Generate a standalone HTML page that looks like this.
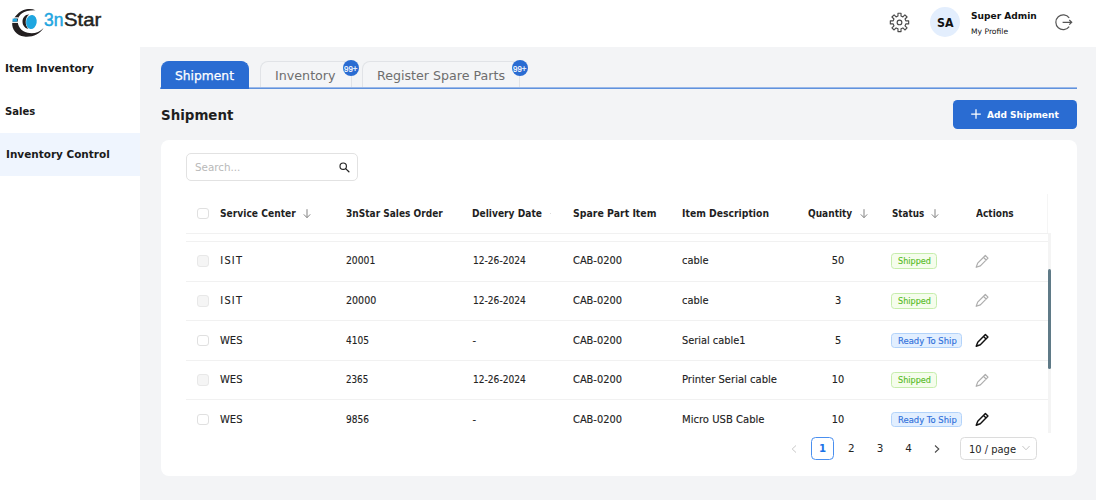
<!DOCTYPE html>
<html lang="en">
<head>
<meta charset="utf-8">
<title>3nStar - Shipment</title>
<style>
*{box-sizing:border-box;margin:0;padding:0}
html,body{width:1096px;height:500px;overflow:hidden;background:#f3f4f6}
body{position:relative;font-family:"DejaVu Sans","Liberation Sans",sans-serif;color:#222;font-size:10px}
.abs{position:absolute}
.t{position:absolute;white-space:nowrap;line-height:normal}
#header{position:absolute;left:0;top:0;width:1096px;height:47px;background:#fff}
#sidebar{position:absolute;left:0;top:47px;width:140px;height:453px;background:#fff}
#navactive{position:absolute;left:0;top:133px;width:140px;height:43px;background:#eff5fe}
.tab{position:absolute;top:60.6px;height:27.4px;border:1px solid #e1e3e7;border-bottom:none;border-radius:8px 8px 0 0;background:#f4f5f7}
.tab.on{background:#2a6cd2;border-color:#2a6cd2;top:61px;height:28px}
.badge{position:absolute;width:16px;height:16px;border-radius:8px;background:#2a6cd2}
#tabline{position:absolute;left:160px;top:87px;width:917px;height:2px;background:linear-gradient(#9bb9e9 0,#9bb9e9 50%,#6092dd 50%,#6092dd 100%)}
#addbtn{position:absolute;left:953px;top:99.5px;width:124px;height:29.5px;border-radius:4.5px;background:#2a6cd2}
#card{position:absolute;left:160.5px;top:140px;width:916.5px;height:336px;background:#fff;border-radius:8px}
#search{position:absolute;left:186px;top:152.6px;width:171.6px;height:28.8px;border:1px solid #e2e2e2;border-radius:5px;background:#fff}
.rowline{position:absolute;left:186px;width:861.8px;height:1px;background:#f1f1f1}
.cb{position:absolute;left:197.2px;width:11.6px;height:11.6px;border:1px solid #e0e0e0;border-radius:3px;background:#fff}
.cb.dis{background:#f5f5f5;border-color:#e8e8e8}
.tag{position:absolute;left:891.3px;height:15.6px;border-radius:3.5px;border:1px solid}
.tag.g{width:45.7px;background:#f5fdec;border-color:#c6edac}
.tag.b{width:70.4px;background:#e2efff;border-color:#b3d3fa}
</style>
</head>
<body>
<div id="header"></div>
<div id="sidebar"></div>
<div id="navactive"></div>

<svg class="abs" style="left:8px;top:5px" width="40" height="36" viewBox="8 5 40 36">
<path d="M35.5 10.2C32.8 8.9 29.6 8.6 26.3 9.3C18.6 10.9 13.6 17.6 12.2 22.6C11.6 29.6 16.6 35.6 24.2 36.6C32.2 37.6 39.6 34.1 43.6 28C39.4 32.4 33.6 34.2 27.6 32.8C21 31.2 17.2 25.8 17.8 20.2C18.4 14.6 23.4 9.9 35.5 10.2Z" fill="#231f20"/>
<rect x="11.5" y="17.3" width="7" height="1.3" fill="#fff"/>
<rect x="11.5" y="21.6" width="7" height="1.3" fill="#fff"/>
<rect x="12.6" y="18.6" width="4.6" height="3" fill="#1fa6e0"/>
<path d="M29.2 14.6C25.2 14.4 22.4 17.8 22.5 21.8C22.6 25.6 25.2 28.6 28.4 28.9C26.6 27.2 25.6 24.6 25.7 21.6C25.8 18.6 27 16 29.2 14.6Z" fill="#231f20"/>
<ellipse cx="31.4" cy="22" rx="5.3" ry="7" transform="rotate(8 31.4 22)" fill="#1fa6e0"/>
</svg>
<svg class="abs" style="left:888px;top:11px" width="23" height="23" viewBox="888 11 23 23"><path d="M897.98 16.08 L897.97 13.23 L901.03 13.23 L901.02 16.08 L902.90 16.86 L904.90 14.83 L907.07 17.00 L905.04 19.00 L905.82 20.88 L908.67 20.87 L908.67 23.93 L905.82 23.92 L905.04 25.80 L907.07 27.80 L904.90 29.97 L902.90 27.94 L901.02 28.72 L901.03 31.57 L897.97 31.57 L897.98 28.72 L896.10 27.94 L894.10 29.97 L891.93 27.80 L893.96 25.80 L893.18 23.92 L890.33 23.93 L890.33 20.87 L893.18 20.88 L893.96 19.00 L891.93 17.00 L894.10 14.83 L896.10 16.86Z" fill="none" stroke="#4a4a4a" stroke-width="1.15" stroke-linejoin="round"/><circle cx="899.5" cy="22.4" r="2.35" fill="none" stroke="#4a4a4a" stroke-width="1.15"/></svg>
<div class="abs" style="left:929.8px;top:7.4px;width:30px;height:30px;border-radius:15px;background:#e3eefd"></div>
<svg class="abs" style="left:1053px;top:12px" width="22" height="21" viewBox="1053 12 22 21"><path d="M1069.2 17.9A7.4 7.4 0 1 0 1069.2 26.7" fill="none" stroke="#555" stroke-width="1.2"/><path d="M1062.6 22.3H1071.6M1069.3 20L1071.7 22.3L1069.3 24.6" fill="none" stroke="#555" stroke-width="1.2"/></svg>
<div class="tab" style="left:260px;width:92px"></div>
<div class="tab" style="left:362.4px;width:157.4px"></div>
<div id="tabline"></div>
<div class="tab on" style="left:160.5px;width:88.3px"></div>
<div class="badge" style="left:343px;top:60.3px"></div>
<div class="badge" style="left:511.6px;top:60.3px"></div>
<div id="addbtn"></div>
<svg class="abs" style="left:970px;top:108px" width="12" height="12" viewBox="0 0 12 12"><path d="M6 1.2V10.8M1.2 6H10.8" stroke="#fff" stroke-width="1.25" fill="none"/></svg>
<div id="card"></div>
<div id="search"></div>
<svg class="abs" style="left:337px;top:160px" width="14" height="14" viewBox="337 160 14 14"><circle cx="343.2" cy="166.2" r="3.2" fill="none" stroke="#222" stroke-width="1.15"/><path d="M345.6 168.6L348.9 171.7" stroke="#222" stroke-width="1.3" stroke-linecap="round"/></svg>
<div class="cb" style="top:207.6px"></div>
<svg class="abs" style="left:302.3px;top:208px" width="10" height="11" viewBox="0 0 10 11"><path d="M5 1.2V9.6M1.8 6.4L5 9.7L8.2 6.4" fill="none" stroke="#7d7d7d" stroke-width="0.95"/></svg>
<svg class="abs" style="left:858.5px;top:208px" width="10" height="11" viewBox="0 0 10 11"><path d="M5 1.2V9.6M1.8 6.4L5 9.7L8.2 6.4" fill="none" stroke="#7d7d7d" stroke-width="0.95"/></svg>
<svg class="abs" style="left:930.3px;top:208px" width="10" height="11" viewBox="0 0 10 11"><path d="M5 1.2V9.6M1.8 6.4L5 9.7L8.2 6.4" fill="none" stroke="#7d7d7d" stroke-width="0.95"/></svg>
<div class="rowline" style="top:233px"></div>
<div class="rowline" style="top:241px"></div>
<div class="rowline" style="top:281px"></div>
<div class="rowline" style="top:320px"></div>
<div class="rowline" style="top:360px"></div>
<div class="rowline" style="top:399px"></div>
<div class="cb dis" style="top:255.2px"></div>
<div class="tag g" style="top:253.2px"></div>
<svg class="abs" style="left:970px;top:248.5px" width="26" height="26" viewBox="0 0 26 26"><path d="M6.20 18.30 L7.68 14.13 L15.32 6.49 L18.01 9.18 L10.37 16.82Z M13.48 8.33 L16.17 11.02" fill="none" stroke="#adadad" stroke-width="1.2" stroke-linejoin="round" stroke-linecap="round"/></svg>
<div class="cb dis" style="top:294.95px"></div>
<div class="tag g" style="top:292.95px"></div>
<svg class="abs" style="left:970px;top:288.25px" width="26" height="26" viewBox="0 0 26 26"><path d="M6.20 18.30 L7.68 14.13 L15.32 6.49 L18.01 9.18 L10.37 16.82Z M13.48 8.33 L16.17 11.02" fill="none" stroke="#adadad" stroke-width="1.2" stroke-linejoin="round" stroke-linecap="round"/></svg>
<div class="cb" style="top:334.7px"></div>
<div class="tag b" style="top:332.7px"></div>
<svg class="abs" style="left:970px;top:328.0px" width="26" height="26" viewBox="0 0 26 26"><path d="M6.20 18.30 L7.76 14.20 L15.39 6.56 L17.94 9.11 L10.30 16.74Z M13.55 8.40 L16.10 10.95" fill="none" stroke="#111" stroke-width="1.45" stroke-linejoin="round" stroke-linecap="round"/></svg>
<div class="cb dis" style="top:374.2px"></div>
<div class="tag g" style="top:372.2px"></div>
<svg class="abs" style="left:970px;top:367.5px" width="26" height="26" viewBox="0 0 26 26"><path d="M6.20 18.30 L7.68 14.13 L15.32 6.49 L18.01 9.18 L10.37 16.82Z M13.48 8.33 L16.17 11.02" fill="none" stroke="#adadad" stroke-width="1.2" stroke-linejoin="round" stroke-linecap="round"/></svg>
<div class="cb" style="top:413.7px"></div>
<div class="tag b" style="top:411.7px"></div>
<svg class="abs" style="left:970px;top:407.0px" width="26" height="26" viewBox="0 0 26 26"><path d="M6.20 18.30 L7.76 14.20 L15.39 6.56 L17.94 9.11 L10.30 16.74Z M13.55 8.40 L16.10 10.95" fill="none" stroke="#111" stroke-width="1.45" stroke-linejoin="round" stroke-linecap="round"/></svg>
<div class="abs" style="left:1047px;top:194px;width:1px;height:39px;background:#f5f5f5"></div>
<div class="abs" style="left:550px;top:213px;width:1px;height:1px;background:#dcdcdc"></div>
<div class="abs" style="left:1047.8px;top:233px;width:3.7px;height:200px;background:#f4f4f4"></div>
<div class="abs" style="left:1047.8px;top:269.3px;width:3.7px;height:100.2px;background:#5f7a87;border-radius:1.5px"></div>
<svg class="abs" style="left:790px;top:443.75px" width="8" height="10" viewBox="0 0 8 10"><path d="M6 1.5L2.2 5L6 8.5" fill="none" stroke="#c9c9c9" stroke-width="1"/></svg>
<div class="abs" style="left:811.3px;top:437.3px;width:23px;height:22.4px;border:1px solid #4a8fef;border-radius:4.5px;background:#fff"></div>
<svg class="abs" style="left:933.25px;top:443.5px" width="8" height="10" viewBox="0 0 8 10"><path d="M2 1.5L5.8 5L2 8.5" fill="none" stroke="#4a4a4a" stroke-width="1.05"/></svg>
<div class="abs" style="left:960.4px;top:437.3px;width:76.4px;height:22.4px;border:1px solid #dcdcdc;border-radius:4.5px;background:#fff"></div>
<svg class="abs" style="left:1020.6px;top:444px" width="10" height="9" viewBox="0 0 10 9"><path d="M1.4 2L5 5.8L8.6 2" fill="none" stroke="#c4c4c4" stroke-width="0.95"/></svg>
<div class="t" style="left:5.00px;top:62.00px;font-size:10.6px;color:#1a1a1a;font-weight:bold;transform:scaleX(1.0055);transform-origin:0 0;">Item Inventory</div>
<div class="t" style="left:5.00px;top:105.00px;font-size:10.6px;color:#1a1a1a;font-weight:bold;transform:scaleX(0.9481);transform-origin:0 0;">Sales</div>
<div class="t" style="left:6.25px;top:148.00px;font-size:10.6px;color:#1a1a1a;font-weight:bold;transform:scaleX(0.9874);transform-origin:0 0;">Inventory Control</div>
<div class="t" style="left:936.50px;top:16.00px;font-size:11.6px;color:#111;font-weight:bold;transform:scaleX(0.9522);transform-origin:0 0;">SA</div>
<div class="t" style="left:971.00px;top:10.30px;font-size:9.5px;color:#111;font-weight:bold;transform:scaleX(0.9547);transform-origin:0 0;">Super Admin</div>
<div class="t" style="left:971.00px;top:27.00px;font-size:7.6px;color:#111;">My Profile</div>
<div class="t" style="left:43.65px;top:9.50px;font-size:18.2px;color:#1fa6e0;font-family:'Liberation Sans','DejaVu Sans',sans-serif;-webkit-text-stroke:0.5px #1fa6e0;transform:scaleX(0.9588);transform-origin:0 0;">3n</div>
<div class="t" style="left:64.20px;top:9.50px;font-size:18.2px;color:#231f20;font-family:'Liberation Sans','DejaVu Sans',sans-serif;-webkit-text-stroke:0.45px #231f20;transform:scaleX(1.1151);transform-origin:0 0;">Star</div>
<div class="t" style="left:175.40px;top:68.00px;font-size:12.4px;color:#fff;-webkit-text-stroke:0.25px #fff;transform:scaleX(0.9926);transform-origin:0 0;">Shipment</div>
<div class="t" style="left:275.00px;top:68.00px;font-size:12.4px;color:#6e6e6e;transform:scaleX(1.0239);transform-origin:0 0;">Inventory</div>
<div class="t" style="left:377.40px;top:68.00px;font-size:12.4px;color:#6e6e6e;transform:scaleX(1.0193);transform-origin:0 0;">Register Spare Parts</div>
<div class="t" style="left:344.40px;top:63.60px;font-size:8.8px;color:#fff;font-family:'Liberation Sans','DejaVu Sans',sans-serif;-webkit-text-stroke:0.2px #fff;transform:scaleX(0.8971);transform-origin:0 0;">99+</div>
<div class="t" style="left:513.00px;top:63.60px;font-size:8.8px;color:#fff;font-family:'Liberation Sans','DejaVu Sans',sans-serif;-webkit-text-stroke:0.2px #fff;transform:scaleX(0.8971);transform-origin:0 0;">99+</div>
<div class="t" style="left:160.60px;top:106.00px;font-size:14.9px;color:#1f1f1f;font-weight:bold;transform:scaleX(0.9001);transform-origin:0 0;">Shipment</div>
<div class="t" style="left:987.30px;top:109.00px;font-size:9.3px;color:#fff;font-weight:bold;transform:scaleX(0.9695);transform-origin:0 0;">Add Shipment</div>
<div class="t" style="left:194.80px;top:161.20px;font-size:10.5px;color:#b9b9b9;transform:scaleX(0.9849);transform-origin:0 0;">Search...</div>
<div class="t" style="left:220.00px;top:208.00px;font-size:9.6px;color:#1f1f1f;font-weight:bold;transform:scaleX(0.9536);transform-origin:0 0;">Service Center</div>
<div class="t" style="left:346.25px;top:208.00px;font-size:9.6px;color:#1f1f1f;font-weight:bold;transform:scaleX(0.9413);transform-origin:0 0;">3nStar Sales Order</div>
<div class="t" style="left:472.25px;top:208.00px;font-size:9.6px;color:#1f1f1f;font-weight:bold;transform:scaleX(0.9502);transform-origin:0 0;">Delivery Date</div>
<div class="t" style="left:573.00px;top:208.00px;font-size:9.6px;color:#1f1f1f;font-weight:bold;transform:scaleX(0.9777);transform-origin:0 0;">Spare Part Item</div>
<div class="t" style="left:682.20px;top:208.00px;font-size:9.6px;color:#1f1f1f;font-weight:bold;transform:scaleX(0.9660);transform-origin:0 0;">Item Description</div>
<div class="t" style="left:808.00px;top:208.00px;font-size:9.6px;color:#1f1f1f;font-weight:bold;transform:scaleX(0.9412);transform-origin:0 0;">Quantity</div>
<div class="t" style="left:892.00px;top:208.00px;font-size:9.6px;color:#1f1f1f;font-weight:bold;transform:scaleX(0.9186);transform-origin:0 0;">Status</div>
<div class="t" style="left:975.60px;top:208.00px;font-size:9.6px;color:#1f1f1f;font-weight:bold;transform:scaleX(0.9396);transform-origin:0 0;">Actions</div>
<div class="t" style="left:220.25px;top:255.00px;font-size:9.8px;color:#222;letter-spacing:1.255px;-webkit-text-stroke:0.12px #222;">ISIT</div>
<div class="t" style="left:346.40px;top:255.00px;font-size:9.8px;color:#222;-webkit-text-stroke:0.12px #222;transform:scaleX(0.9383);transform-origin:0 0;">20001</div>
<div class="t" style="left:472.50px;top:255.00px;font-size:9.8px;color:#222;-webkit-text-stroke:0.12px #222;transform:scaleX(0.9265);transform-origin:0 0;">12-26-2024</div>
<div class="t" style="left:573.00px;top:255.00px;font-size:9.8px;color:#222;-webkit-text-stroke:0.12px #222;transform:scaleX(1.0055);transform-origin:0 0;">CAB-0200</div>
<div class="t" style="left:682.00px;top:255.00px;font-size:9.8px;color:#222;-webkit-text-stroke:0.12px #222;transform:scaleX(1.0053);transform-origin:0 0;">cable</div>
<div class="t" style="left:831.87px;top:255.00px;font-size:9.8px;color:#222;-webkit-text-stroke:0.12px #222;">50</div>
<div class="t" style="left:898.00px;top:255.80px;font-size:9.1px;color:#56bb26;-webkit-text-stroke:0.15px #56bb26;transform:scaleX(0.8923);transform-origin:0 0;">Shipped</div>
<div class="t" style="left:220.25px;top:295.00px;font-size:9.8px;color:#222;letter-spacing:1.255px;-webkit-text-stroke:0.12px #222;">ISIT</div>
<div class="t" style="left:346.40px;top:295.00px;font-size:9.8px;color:#222;-webkit-text-stroke:0.12px #222;transform:scaleX(0.9704);transform-origin:0 0;">20000</div>
<div class="t" style="left:472.50px;top:295.00px;font-size:9.8px;color:#222;-webkit-text-stroke:0.12px #222;transform:scaleX(0.9265);transform-origin:0 0;">12-26-2024</div>
<div class="t" style="left:573.00px;top:295.00px;font-size:9.8px;color:#222;-webkit-text-stroke:0.12px #222;transform:scaleX(1.0055);transform-origin:0 0;">CAB-0200</div>
<div class="t" style="left:682.00px;top:295.00px;font-size:9.8px;color:#222;-webkit-text-stroke:0.12px #222;transform:scaleX(1.0053);transform-origin:0 0;">cable</div>
<div class="t" style="left:834.98px;top:295.00px;font-size:9.8px;color:#222;-webkit-text-stroke:0.12px #222;">3</div>
<div class="t" style="left:898.00px;top:295.80px;font-size:9.1px;color:#56bb26;-webkit-text-stroke:0.15px #56bb26;transform:scaleX(0.8923);transform-origin:0 0;">Shipped</div>
<div class="t" style="left:220.25px;top:335.00px;font-size:9.8px;color:#222;-webkit-text-stroke:0.12px #222;transform:scaleX(1.0177);transform-origin:0 0;">WES</div>
<div class="t" style="left:346.40px;top:335.00px;font-size:9.8px;color:#222;-webkit-text-stroke:0.12px #222;transform:scaleX(0.9223);transform-origin:0 0;">4105</div>
<div class="t" style="left:472.50px;top:335.00px;font-size:9.8px;color:#222;-webkit-text-stroke:0.12px #222;">-</div>
<div class="t" style="left:573.00px;top:335.00px;font-size:9.8px;color:#222;-webkit-text-stroke:0.12px #222;transform:scaleX(1.0055);transform-origin:0 0;">CAB-0200</div>
<div class="t" style="left:682.00px;top:335.00px;font-size:9.8px;color:#222;-webkit-text-stroke:0.12px #222;">Serial cable1</div>
<div class="t" style="left:834.98px;top:335.00px;font-size:9.8px;color:#222;-webkit-text-stroke:0.12px #222;">5</div>
<div class="t" style="left:897.50px;top:335.80px;font-size:9.1px;color:#2f6fdb;-webkit-text-stroke:0.15px #2f6fdb;transform:scaleX(0.9263);transform-origin:0 0;">Ready To Ship</div>
<div class="t" style="left:220.25px;top:374.00px;font-size:9.8px;color:#222;-webkit-text-stroke:0.12px #222;transform:scaleX(1.0177);transform-origin:0 0;">WES</div>
<div class="t" style="left:346.40px;top:374.00px;font-size:9.8px;color:#222;-webkit-text-stroke:0.12px #222;transform:scaleX(0.8922);transform-origin:0 0;">2365</div>
<div class="t" style="left:472.50px;top:374.00px;font-size:9.8px;color:#222;-webkit-text-stroke:0.12px #222;transform:scaleX(0.9265);transform-origin:0 0;">12-26-2024</div>
<div class="t" style="left:573.00px;top:374.00px;font-size:9.8px;color:#222;-webkit-text-stroke:0.12px #222;transform:scaleX(1.0055);transform-origin:0 0;">CAB-0200</div>
<div class="t" style="left:682.00px;top:374.00px;font-size:9.8px;color:#222;-webkit-text-stroke:0.12px #222;transform:scaleX(1.0225);transform-origin:0 0;">Printer Serial cable</div>
<div class="t" style="left:831.87px;top:374.00px;font-size:9.8px;color:#222;-webkit-text-stroke:0.12px #222;">10</div>
<div class="t" style="left:898.00px;top:374.80px;font-size:9.1px;color:#56bb26;-webkit-text-stroke:0.15px #56bb26;transform:scaleX(0.8923);transform-origin:0 0;">Shipped</div>
<div class="t" style="left:220.25px;top:414.00px;font-size:9.8px;color:#222;-webkit-text-stroke:0.12px #222;transform:scaleX(1.0177);transform-origin:0 0;">WES</div>
<div class="t" style="left:346.40px;top:414.00px;font-size:9.8px;color:#222;-webkit-text-stroke:0.12px #222;transform:scaleX(0.9223);transform-origin:0 0;">9856</div>
<div class="t" style="left:472.50px;top:414.00px;font-size:9.8px;color:#222;-webkit-text-stroke:0.12px #222;">-</div>
<div class="t" style="left:573.00px;top:414.00px;font-size:9.8px;color:#222;-webkit-text-stroke:0.12px #222;transform:scaleX(1.0055);transform-origin:0 0;">CAB-0200</div>
<div class="t" style="left:682.00px;top:414.00px;font-size:9.8px;color:#222;-webkit-text-stroke:0.12px #222;transform:scaleX(1.0244);transform-origin:0 0;">Micro USB Cable</div>
<div class="t" style="left:831.87px;top:414.00px;font-size:9.8px;color:#222;-webkit-text-stroke:0.12px #222;">10</div>
<div class="t" style="left:897.50px;top:414.80px;font-size:9.1px;color:#2f6fdb;-webkit-text-stroke:0.15px #2f6fdb;transform:scaleX(0.9263);transform-origin:0 0;">Ready To Ship</div>
<div class="t" style="left:819.05px;top:443.20px;font-size:10.2px;color:#1a73e8;font-weight:bold;">1</div>
<div class="t" style="left:847.94px;top:442.20px;font-size:10.4px;color:#262626;">2</div>
<div class="t" style="left:876.69px;top:442.20px;font-size:10.4px;color:#262626;">3</div>
<div class="t" style="left:905.19px;top:442.20px;font-size:10.4px;color:#262626;">4</div>
<div class="t" style="left:968.75px;top:442.50px;font-size:10.4px;color:#262626;transform:scaleX(0.9537);transform-origin:0 0;">10 / page</div>
</body>
</html>
